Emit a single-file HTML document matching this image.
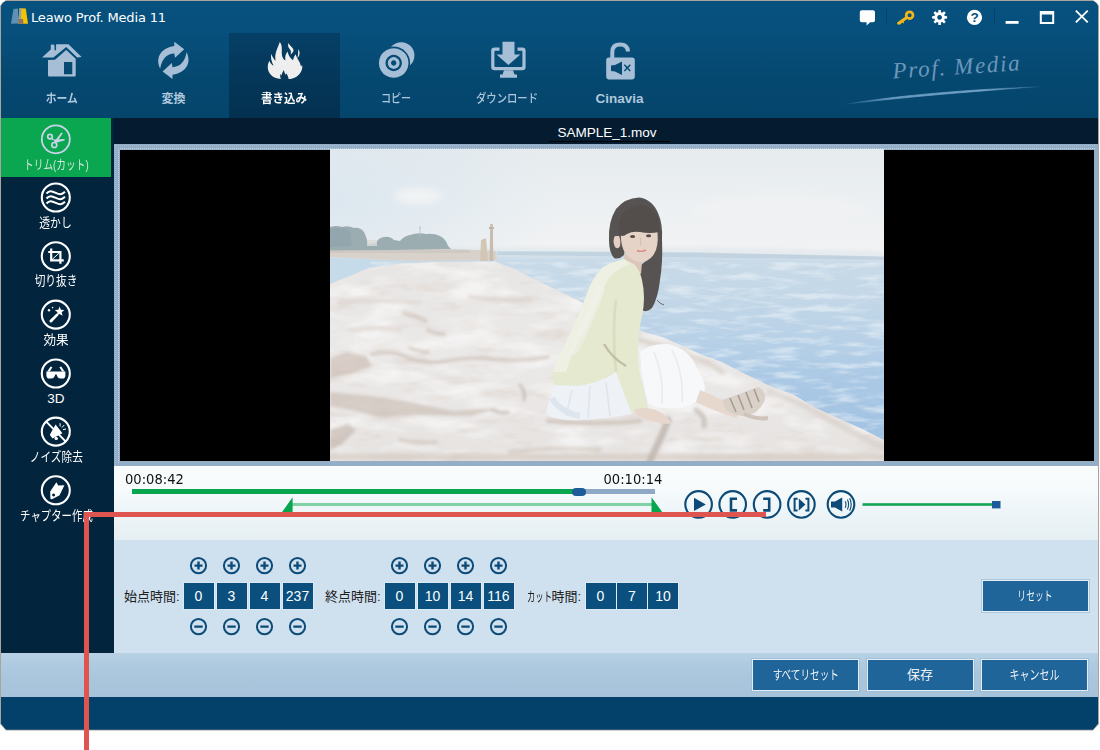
<!DOCTYPE html>
<html lang="ja">
<head>
<meta charset="utf-8">
<title>Leawo Prof. Media 11</title>
<style>
*{box-sizing:border-box;margin:0;padding:0}
html,body{width:1100px;height:750px;overflow:hidden;background:#fff}
body{position:relative;font-family:"Liberation Sans","Noto Sans CJK JP",sans-serif;font-size:13px;color:#fff}
.abs{position:absolute}
#win{position:absolute;left:0;top:0;width:1100px;height:731px;background:#a9a49c;
 clip-path:polygon(0 6px,2px 3px,6px 0,1093px 0,1097px 3px,1099px 6px,1099px 724px,1093px 730.5px,6px 730.5px,0 724px)}
#inner{position:absolute;left:0;top:0;width:1100px;height:731px;overflow:hidden;background:#07507d;
 clip-path:polygon(1px 6px,3px 3px,6px 1px,1093px 1px,1096px 3px,1098px 6px,1098px 723.5px,1093px 729.5px,6px 729.5px,1px 723.5px)}
/* top bar */
#top{position:absolute;left:0;top:0;width:1100px;height:118px;background:linear-gradient(#07517e 0,#07507d 30px,#05486f 80px,#04456c 118px)}
#title{position:absolute;left:31px;top:10px;font-family:"DejaVu Sans","Liberation Sans",sans-serif;font-size:13px;color:#fff;white-space:nowrap;letter-spacing:-.15px}
.tab{position:absolute;top:33px;width:111px;height:85px}
.tab.on{background:linear-gradient(#063f66,#03304f)}
.tab svg{position:absolute;left:50%;top:0;transform:translateX(-50%)}
.tab .lb{position:absolute;left:-20px;right:-20px;top:58px;text-align:center;font-size:12px;font-weight:700;color:#b0c8dd;white-space:nowrap;line-height:16px}
.tab.on .lb{color:#fff}
/* sidebar */
#side{position:absolute;left:0;top:118px;width:114px;height:535px;background:#03243d}
.si{position:absolute;left:0;width:111px;height:58.5px}
.si.on{background:#0aa650}
.si svg{position:absolute;left:40px;top:6px}
.si .lb{position:absolute;left:-10px;right:-10px;top:38px;text-align:center;font-size:13px;color:#fff;white-space:nowrap;line-height:16px}
.si.on .lb{color:#d6ebdf}
/* main */
#fname{position:absolute;left:114px;top:118px;width:986px;height:26px;background:#041b30;text-align:center;font-size:13.55px;line-height:29px;color:#fff;letter-spacing:-.05px}
#frame{position:absolute;left:114px;top:144px;width:984px;height:322px;background:#94aec8}
#black{position:absolute;left:120px;top:150px;width:974px;height:310.5px;background:#000}
#photo{position:absolute;left:330px;top:149px;width:554px;height:312px}
#ctl{position:absolute;left:114px;top:466px;width:986px;height:74px;background:linear-gradient(#f8fcfd 0,#f7fbfc 20px,#eef5f8 45px,#e6eff3 74px)}
#trim{position:absolute;left:114px;top:540px;width:986px;height:113px;background:#cfe0ee}
#foot{position:absolute;left:0;top:653px;width:1100px;height:44px;background:linear-gradient(#b7d0e4 0,#aac7de 20px,#a6c3db 44px)}
#bot{position:absolute;left:0;top:697px;width:1100px;height:34px;background:#04416a}
.time{transform:scaleY(1.1);transform-origin:0 80%;position:absolute;font-family:"DejaVu Sans","Liberation Sans",sans-serif;font-size:13.1px;color:#111;white-space:nowrap;line-height:14px}
.box{position:absolute;top:583px;width:30px;height:26px;background:#0a4f7d;color:#fff;font-size:14px;line-height:27.5px;text-align:center;outline:1px solid rgba(230,240,248,.55)}
.tl{position:absolute;top:589px;font-size:13px;line-height:16px;color:#1c1c1c;white-space:nowrap}
.btn{font-weight:350;position:absolute;width:107px;height:32px;background:#20659a;border:1px solid #e3eef6;box-shadow:0 0 0 1px rgba(150,185,212,.6);color:#fff;font-size:13px;line-height:30.5px;text-align:center;white-space:nowrap}
.pm{position:absolute}
.k{display:inline-block;transform-origin:50% 50%}
#red1{position:absolute;left:84px;top:512px;width:682px;height:5px;background:#de554f}
#red2{position:absolute;left:84px;top:512px;width:5px;height:238px;background:#de554f}
</style>
</head>
<body>
<div id="win"><div id="inner">
<div id="top">
 <svg class="abs" style="left:10px;top:8px" width="20" height="18" viewBox="10 8 20 18">
  <path d="M13.5,9 L18,8.5 L18.5,23.5 L11,23.8Z" fill="#6f9cc0" opacity=".85"/>
  <path d="M19.5,8.3 L25.8,8.5 L28,23.8 L18.2,23.8Z" fill="#f5c400"/>
  <path d="M19.5,8.3 L21.5,8.4 L21.2,19 L18.2,23.8Z" fill="#9aa0a8"/>
  <path d="M18.3,19 L23,19 L23.5,23.8 L18.2,23.8Z" fill="#8a7466"/>
 </svg>
 <div id="title">Leawo Prof. Media 11</div>

 <div class="tab" style="left:6px"><div class="lb"><span class="k" style="transform:scaleX(.9)">ホーム</span></div></div>
 <div class="tab" style="left:118px"><div class="lb">変換</div></div>
 <div class="tab on" style="left:229px"><div class="lb"><span class="k" style="transform:scaleX(.96)">書き込み</span></div></div>
 <div class="tab" style="left:341px"><div class="lb" style="font-weight:500"><span class="k" style="transform:scaleX(.84)">コピー</span></div></div>
 <div class="tab" style="left:452px"><div class="lb" style="font-weight:500"><span class="k" style="transform:scaleX(.86)">ダウンロード</span></div></div>
 <div class="tab" style="left:564px"><div class="lb" style="font-size:13.5px;top:58px">Cinavia</div></div>
 <svg class="abs" style="left:0;top:33px" width="700" height="60" viewBox="0 33 700 60">
  <g fill="#a6bfd6">
   <!-- home -->
   <path d="M42,57.6 L56.5,44.3 L68.5,44.3 L81.6,57 L77.2,57.6 L66.2,47 L53.4,57.6Z"/>
   <rect x="50.8" y="44.6" width="3.6" height="7"/>
   <path d="M55.3,43.5 V50.2" stroke="#07507d" stroke-width="1.5"/>
   <path fill-rule="evenodd" d="M48,60 L55,59.8 L66.2,50 L75.7,58.8 L75.7,75.5 Q75.7,76.6 74.6,76.6 L49.1,76.6 Q48,76.6 48,75.5Z M64,62 H72.3 V74.3 H64Z"/>
   <!-- convert -->
   <path id="cv" d="M160.2,68.5 C155.6,59 159,48.6 174.3,46 L174.3,41.7 L184.2,49.3 L175,57.8 L174.3,53.6 C167,54 162,58.5 160.2,68.5Z"/>
   <use href="#cv" transform="rotate(180 173.4 60.4)"/>
   <!-- copy -->
   <mask id="mk" maskUnits="userSpaceOnUse" x="370" y="35" width="60" height="50"><rect x="370" y="35" width="60" height="50" fill="#fff"/><circle cx="393.7" cy="63" r="16.4" fill="#000"/></mask><circle cx="401.2" cy="55.4" r="13.2" mask="url(#mk)"/>
   <path fill-rule="evenodd" d="M393.7,48.2 a14.8 14.8 0 1 0 .01,0Z M393.7,54.8 a8.2 8.2 0 1 1 -.01,0Z M393.7,57.1 a5.9 5.9 0 1 0 .01,0Z M393.7,60.3 a2.7 2.7 0 1 1 -.01,0Z"/>
   <!-- download -->
   <path d="M502.5,41.8 H514.5 V54.6 H520.3 L508.4,65 L496.5,54.6 H502.5Z"/>
   <path d="M499.5,47.5 H494.5 Q491.2,47.5 491.2,50.8 V67 Q491.2,70.3 494.5,70.3 H522.3 Q525.6,70.3 525.6,67 V50.8 Q525.6,47.5 522.3,47.5 H517.5 V50.7 H521.3 Q522.4,50.7 522.4,51.8 V66 Q522.4,67.1 521.3,67.1 H495.5 Q494.4,67.1 494.4,66 V51.8 Q494.4,50.7 495.5,50.7 H499.5Z"/>
   <path d="M504,70.3 H513 L514.5,74.6 H517 V77.8 H500 V74.6 H502.5Z"/>
   <!-- lock -->
   <path d="M610.3,58 V52 Q610.3,42.6 620.2,42.6 Q629.5,42.6 630,51.6 L626,51.6 Q625.6,46.4 620.2,46.4 Q614.3,46.4 614.3,52 V58Z"/>
   <path fill-rule="evenodd" d="M609,57.4 H632 Q634.8,57.4 634.8,60.2 V76.6 Q634.8,79.4 632,79.4 H609 Q606.2,79.4 606.2,76.6 V60.2 Q606.2,57.4 609,57.4Z M611,65.5 L615,65 L622,61.5 V75 L615,71.5 L611,71Z M623.8,65.2 L624.8,64.2 L627.3,66.8 L629.8,64.2 L630.8,65.2 L628.3,67.9 L630.8,70.6 L629.8,71.6 L627.3,69 L624.8,71.6 L623.8,70.6 L626.3,67.9Z"/>
  </g>
  <!-- flame -->
  <g fill="#eeeeee">
   <path d="M281,79 C272,78.5 267.2,72.5 267.8,66 C268,63.8 268.7,62.3 269.4,60.8 C270.3,63.3 271.8,64.8 273.6,65.8 C271.6,61.5 270.3,58 271.3,53.8 C272.3,57 273.8,59.2 275.6,60.8 C274.2,54 277.2,49 279.8,42 C283.6,46.5 280.4,53 282.8,57.8 C283.5,59.2 284.5,60 285.4,60.4 C284.8,57 285.6,54 287.5,51.5 C288.2,54.5 289.6,57.5 293,60.3 C293.6,58 294.2,56 295.6,54.2 C296.8,58.5 300.2,61.5 301,66.5 C301.5,66 301.9,65.4 302.1,64.7 C303,69 300.8,73.8 296.5,76.7 C293.8,78.4 291,79 288.6,79 C288.4,76.5 287.2,74.5 286,73.2 L285.2,75.2 C284.8,73 284.3,71.2 283.6,70 C283,72 281.6,73.8 281.6,75.5 L280.4,74 C280,76 280.3,77.8 281,79Z"/>
   <path d="M288.6,43 C290.4,47 294.4,48.2 293.4,51.3 C292.8,53 291.3,53.6 290.6,54.8 C291.2,52.2 291.2,50.6 289.6,49 C288,47.2 287.6,45 288.6,43Z"/>
   <path d="M298.4,49 C300.2,52 300.2,55.2 297.4,58.2 C298.4,55 298,52 298.4,49Z"/>
  </g>
 </svg>


 <svg class="abs" style="left:850px;top:0" width="250" height="34" viewBox="850 0 250 34">
  <g fill="#fff">
   <path d="M861.8,10.3 H873 Q875,10.3 875,12.3 V20.2 Q875,22.2 873,22.2 H870.2 L866.6,25.4 L866.6,22.2 H861.8 Q859.8,22.2 859.8,20.2 V12.3 Q859.8,10.3 861.8,10.3Z"/>
   <path fill-rule="evenodd" d="M938.29,12.26 L938.39,9.90 L940.81,9.90 L940.91,12.26 L942.30,12.84 L944.05,11.24 L945.76,12.95 L944.16,14.70 L944.74,16.09 L947.10,16.19 L947.10,18.61 L944.74,18.71 L944.16,20.10 L945.76,21.85 L944.05,23.56 L942.30,21.96 L940.91,22.54 L940.81,24.90 L938.39,24.90 L938.29,22.54 L936.90,21.96 L935.15,23.56 L933.44,21.85 L935.04,20.10 L934.46,18.71 L932.10,18.61 L932.10,16.19 L934.46,16.09 L935.04,14.70 L933.44,12.95 L935.15,11.24 L936.90,12.84Z M939.60,15.00 a2.4 2.4 0 1 0 .01,0Z"/>
   <circle cx="974.5" cy="17.4" r="7.6"/>
   <rect x="1005.6" y="21" width="13" height="2.8"/>
   <path fill-rule="evenodd" d="M1039.8,11 H1054.2 V24 H1039.8Z M1041.8,14.4 H1052.2 V22 H1041.8Z"/>
   <path d="M1075.2,11.2 L1076.5,9.9 L1081.8,15.2 L1087.1,9.9 L1088.4,11.2 L1083.1,16.5 L1088.4,21.8 L1087.1,23.1 L1081.8,17.8 L1076.5,23.1 L1075.2,21.8 L1080.5,16.5Z"/>
  </g>
  <text x="974.5" y="22.3" text-anchor="middle" font-family="Liberation Sans,sans-serif" font-weight="700" font-size="13.5" fill="#07507d">?</text>
  <g fill="none" stroke="#f2b61c">
   <circle cx="909.6" cy="15.2" r="3.4" stroke-width="2.7"/>
   <path d="M906.8,17.6 L898.6,23.2" stroke-width="3" stroke-linecap="round"/>
   <path d="M902.2,21.2 L903.6,23 M899.8,22.8 L900.8,24.2" stroke-width="1.4"/>
  </g>
  <path d="M886.5,9.5 V24.5 M994.5,9.5 V24.5" stroke="#053a5d" stroke-width="1" stroke-dasharray="2 1"/>
 </svg>
 <svg class="abs" style="left:830px;top:40px" width="240" height="76" viewBox="830 40 240 76">
  <defs><linearGradient id="sw" x1="0" x2="1"><stop offset="0" stop-color="#5f93bd" stop-opacity="0"/><stop offset=".25" stop-color="#6fa0c8" stop-opacity=".9"/><stop offset=".7" stop-color="#7aa9cf" stop-opacity=".9"/><stop offset="1" stop-color="#6fa0c8" stop-opacity="0"/></linearGradient></defs>
  <text transform="translate(893 78.5) rotate(-3.7)" font-family="Liberation Serif,serif" font-style="italic" font-size="23" letter-spacing="1.7" fill="#6d97bb">Prof. Media</text>
  <path d="M843,104.5 C900,95 970,89.5 1042,86.6 C975,91 905,97 843,104.5Z" fill="url(#sw)" stroke="url(#sw)" stroke-width=".8"/>
 </svg>


</div>
<div id="side">
 <div class="si on" style="top:0;height:59px"></div>
 <div class="abs" style="left:-20px;width:152px;top:38.5px;text-align:center;font-size:13px;line-height:16px;color:#d3e6dc;white-space:nowrap"><span class="k" style="transform:scaleX(0.745)">トリム(カット)</span></div>
 <div class="abs" style="left:-20px;width:152px;top:96.7px;text-align:center;font-size:13px;line-height:16px;color:#fff;white-space:nowrap"><span class="k" style="transform:scaleX(0.83)">透かし</span></div>
 <div class="abs" style="left:-20px;width:152px;top:155.4px;text-align:center;font-size:13px;line-height:16px;color:#fff;white-space:nowrap"><span class="k" style="transform:scaleX(0.82)">切り抜き</span></div>
 <div class="abs" style="left:-20px;width:152px;top:213.8px;text-align:center;font-size:13px;line-height:16px;color:#fff;white-space:nowrap"><span class="k" style="transform:scaleX(0.97)">効果</span></div>
 <div class="abs" style="left:-20px;width:152px;top:272.7px;text-align:center;font-size:13.5px;line-height:16px;color:#fff;white-space:nowrap"><span class="k" style="transform:scaleX(1)">3D</span></div>
 <div class="abs" style="left:-20px;width:152px;top:330.8px;text-align:center;font-size:13px;line-height:16px;color:#fff;white-space:nowrap"><span class="k" style="transform:scaleX(0.82)">ノイズ除去</span></div>
 <div class="abs" style="left:-20px;width:152px;top:389.5px;text-align:center;font-size:13px;line-height:16px;color:#fff;white-space:nowrap"><span class="k" style="transform:scaleX(0.8)">チャプター作成</span></div>
 <svg class="abs" style="left:0;top:0" width="114" height="420" viewBox="0 118 114 420">
  <circle cx="55.8" cy="139.3" r="14" fill="none" stroke="#c9d3ea" stroke-width="1.8"/>
  <circle cx="55.8" cy="197.5" r="14" fill="none" stroke="#fff" stroke-width="2.1"/>
  <circle cx="55.8" cy="256.2" r="14" fill="none" stroke="#fff" stroke-width="2.1"/>
  <circle cx="55.8" cy="314.6" r="14" fill="none" stroke="#fff" stroke-width="2.1"/>
  <circle cx="55.8" cy="373.5" r="14" fill="none" stroke="#fff" stroke-width="2.1"/>
  <circle cx="55.8" cy="431.6" r="14" fill="none" stroke="#fff" stroke-width="2.1"/>
  <circle cx="55.8" cy="490.3" r="14" fill="none" stroke="#fff" stroke-width="2.1"/>
  <g fill="none" stroke="#c9d3ea" stroke-width="1.7">
   <circle cx="50" cy="136.6" r="2.3"/><circle cx="54.3" cy="145" r="2.5"/>
  </g>
  <g fill="#c9d3ea">
   <path d="M51.8,138 L55.4,140.2 L61.3,132.6 L62.8,133.3 L56.6,142.2 L55.6,143.2 L54.2,142.4 L54.6,140.8 L51,139.2Z"/>
   <path d="M54.6,139.6 L64.8,139 L64.4,140.6 L57,142.6 L54.6,141.2Z"/>
  </g>
  <path d="M46.5,193.5 C49.5,189.9 52,191.1 55.8,192.9 S61.5,194.9 65,191.7" fill="none" stroke="#fff" stroke-width="2"/>
  <path d="M46.5,198.5 C49.5,194.9 52,196.1 55.8,197.9 S61.5,199.9 65,196.7" fill="none" stroke="#fff" stroke-width="2"/>
  <path d="M46.5,203.5 C49.5,199.9 52,201.1 55.8,202.9 S61.5,204.9 65,201.7" fill="none" stroke="#fff" stroke-width="2"/>
  <g fill="none" stroke="#fff">
   <path d="M51.2,248.4 V260.4 H63.8 M48.2,252 H60.4 V263.8" stroke-width="2.2"/>
   <path d="M52.2,259.4 L59.6,252.6" stroke-width="1"/>
  </g>
  <g fill="#fff">
   <path d="M59.6,306.6 L60.9,309.8 L64.4,310 L61.7,312.3 L62.6,315.8 L59.6,313.9 L56.6,315.8 L57.5,312.3 L54.8,310 L58.3,309.8Z"/>
   <path d="M56.6,313.4 L58.4,315.2 L52,322 Q50.8,323 49.8,322 Q48.9,321 49.9,319.9Z"/>
   <circle cx="49" cy="310.3" r="1.2"/><circle cx="52.6" cy="307.6" r=".8"/>
  </g>
  <g fill="#fff">
   <path d="M46.4,371.6 H65.4 V375.5 Q65.4,378.6 62.4,378.6 H60.4 Q58,378.6 57.2,376.2 L56.6,374.6 H55.2 L54.6,376.2 Q53.8,378.6 51.4,378.6 H49.4 Q46.4,378.6 46.4,375.5Z"/>
   <path d="M47.2,371.6 L50.6,366.4 L52.4,367.2 L49.8,371.6Z M64.6,371.6 L61.2,366.4 L59.4,367.2 L62,371.6Z"/>
  </g>
  <g fill="#fff">
   <path d="M55.6,424.6 L62.4,433.2 L52.6,438.6 L50.2,435.6 Q49.6,434.6 50.4,433.8Z"/>
   <circle cx="56.2" cy="438.4" r="1.7"/>
  </g>
  <g stroke="#fff" fill="none">
   <path d="M46,421.4 L65.8,441.6" stroke-width="2"/>
   <path d="M60.2,426.4 L60,423.2 M62,427.6 L64.2,425 M63,429.6 L66,429" stroke-width="1"/>
  </g>
  <path d="M47.4,422.8 L64.4,440.2" stroke="#03243d" stroke-width=".0"/>
  <path fill="#fff" fill-rule="evenodd" d="M56.4,482.2 L58.2,485.6 L64.4,485.2 L59.6,495.2 L52,499.2 Q50.6,499.6 50.4,498.2 L50.2,491.4Z M53.6,493.6 a1.5 1.5 0 1 0 .01,0Z"/>
 </svg>

</div>
<div id="fname">SAMPLE_1.mov</div>
<div class="abs" style="left:549px;top:141px;width:121px;height:1.2px;background:#000"></div>
<div id="frame"><div class="abs" style="left:1px;top:1px;right:1px;bottom:1px;border:1px dotted #a3bbd3;border-right:0;border-bottom:0"></div><div class="abs" style="left:4px;top:4px;right:3px;bottom:3px;border:1px dotted #c0d3e4;border-right:0;border-bottom:0"></div></div>
<div id="black"></div>
<!--PHOTO_START-->
<svg id="photo" viewBox="330 149 554 312" width="554" height="312" preserveAspectRatio="none">
 <defs>
  <linearGradient id="sky" x1="0" y1="149" x2="0" y2="252" gradientUnits="userSpaceOnUse">
   <stop offset="0" stop-color="#e6ebee"/><stop offset=".55" stop-color="#ecf0f2"/><stop offset="1" stop-color="#f2f2f3"/>
  </linearGradient>
  <linearGradient id="sea" x1="0" y1="250" x2="0" y2="461" gradientUnits="userSpaceOnUse">
   <stop offset="0" stop-color="#cadbe8"/><stop offset=".22" stop-color="#c3d7e7"/><stop offset=".42" stop-color="#b8d1e7"/><stop offset=".6" stop-color="#abc9e5"/><stop offset=".8" stop-color="#a4c4e3"/><stop offset="1" stop-color="#a1c1e1"/>
  </linearGradient>
  <linearGradient id="rock" x1="0" y1="261" x2="0" y2="461" gradientUnits="userSpaceOnUse">
   <stop offset="0" stop-color="#e8e6e5"/><stop offset=".5" stop-color="#ebe9e8"/><stop offset="1" stop-color="#e6e3e1"/>
  </linearGradient>
  <radialGradient id="skyl" cx="330" cy="205" r="230" gradientUnits="userSpaceOnUse" gradientTransform="translate(0 102) scale(1 .5)"><stop offset="0" stop-color="#d6e4ee" stop-opacity=".75"/><stop offset="1" stop-color="#d6e4ee" stop-opacity="0"/></radialGradient>
  <filter id="b1" x="-10%" y="-10%" width="120%" height="120%"><feGaussianBlur stdDeviation=".7"/></filter>
  <filter id="b2" x="-20%" y="-20%" width="140%" height="140%"><feGaussianBlur stdDeviation="1.6"/></filter>
  <filter id="b4" x="-30%" y="-30%" width="160%" height="160%"><feGaussianBlur stdDeviation="4"/></filter>
  <filter id="tex" x="0" y="0" width="100%" height="100%">
   <feTurbulence type="fractalNoise" baseFrequency=".028 .085" numOctaves="4" seed="11" result="n"/>
   <feColorMatrix in="n" type="matrix" values="0 0 0 0 .75  0 0 0 0 .69  0 0 0 0 .65  0 0 0 3.4 -1.75"/>
   <feComposite in2="SourceGraphic" operator="in"/>
  </filter>
  <filter id="tex2" x="0" y="0" width="100%" height="100%">
   <feTurbulence type="fractalNoise" baseFrequency=".02 .06" numOctaves="3" seed="3" result="n"/>
   <feColorMatrix in="n" type="matrix" values="0 0 0 0 .97  0 0 0 0 .97  0 0 0 0 .97  0 0 0 3 -1.35"/>
   <feComposite in2="SourceGraphic" operator="in"/>
  </filter>
  <filter id="rip" x="0" y="0" width="100%" height="100%">
   <feTurbulence type="fractalNoise" baseFrequency=".03 .16" numOctaves="3" seed="5" result="n"/>
   <feColorMatrix in="n" type="matrix" values="0 0 0 0 .86  0 0 0 0 .91  0 0 0 0 .95  0 0 0 3.2 -1.5"/>
   <feComposite in2="SourceGraphic" operator="in"/>
  </filter>
  <clipPath id="pc"><rect x="330" y="149" width="554" height="312"/></clipPath>
  <path id="pier" d="M330,284 L350,276 L368,268.5 L400,263.5 L440,262 L495,261.5 L512,268 L540,282 L579,301 L600,312 L638,330 L665,338 L700,354 L722,362 L745,374 L770,386 L794,395 L816,408 L840,419 L862,429 L884,440 V461 H330Z"/>
 </defs>
 <g clip-path="url(#pc)">
  <rect x="330" y="149" width="554" height="114" fill="url(#sky)"/>
  <path d="M330,252 L560,251 L700,253 L884,257 V461 H330Z" fill="url(#sea)"/>
  <path d="M330,262 H884 V461 H330Z" fill="#fff" filter="url(#rip)" opacity=".55"/>
  <!-- haze on horizon -->
  <path d="M330,247 L700,247 L884,251 V261 L700,258 H330Z" fill="#dde6ec" opacity=".6" filter="url(#b2)"/>
  <rect x="330" y="149" width="260" height="103" fill="url(#skyl)"/>
  <path d="M497,251.5 L700,252.5 L884,256.5 V260 L700,257.5 L497,255Z" fill="#bccedd" opacity=".75" filter="url(#b1)"/>
  <!-- clouds -->
  <ellipse cx="418" cy="196" rx="24" ry="7" fill="#f3f4f5" filter="url(#b4)"/>
  <ellipse cx="780" cy="210" rx="90" ry="16" fill="#eff1f2" filter="url(#b4)"/>
  <!-- distant land -->
  <g filter="url(#b1)">
   <path d="M330,227 Q336,225 342,227 Q348,225 354,228 Q360,227 364,232 Q367,238 368,244 L376,243 Q378,238 384,237 Q390,236 394,240 L400,241 Q404,236 410,235 Q418,232 426,234 Q434,233 440,236 Q446,239 448,246 L452,250 L330,252Z" fill="#9cadb1"/>
   <rect x="367" y="240" width="10" height="6" fill="#dcdcd8" opacity=".8"/>
   <path d="M330,229 Q340,226 350,231 L352,246 L330,247Z" fill="#93a6ad"/>
   <path d="M330,251 L452,249 L480,250 L496,251 L497,260 L420,261 L368,259 L330,257Z" fill="#d9d2cb"/>
   <path d="M330,250 H470 V253 H330Z" fill="#c9c4bd" opacity=".7"/>
   <path d="M490.2,224 H492.8 L493.4,261 H489.6Z" fill="#c8bcae"/>
   <rect x="489" y="227" width="5" height="2" fill="#c2b5a8"/>
   <path d="M481,240 L486,238 L488,261 H480Z" fill="#d2c7b6"/>
   <path d="M420,226 V236 M419,228 H421" stroke="#b9c0c4" stroke-width=".8"/>
  </g>
  <path d="M330,258 L372,260 L368,268 L330,284Z" fill="#c6dbea"/>
  <!-- pier -->
  <use href="#pier" fill="url(#rock)"/>
  <use href="#pier" fill="#fff" filter="url(#tex)" opacity=".66"/>
  <use href="#pier" fill="#fff" filter="url(#tex2)" opacity=".6"/>
  <!-- rock cracks / shadows -->
  <g filter="url(#b2)" stroke-linecap="round" stroke-linejoin="round" opacity=".72">
   <path d="M330,392 L372,396 L410,402 L452,411 L500,408 L470,416 L420,415 L380,417 L352,410 L330,406Z" fill="#c9bcb3" opacity=".9"/>
   <path d="M330,358 L346,352 L366,356 L372,366 L350,374 L330,378Z" fill="#c9b9ae" opacity=".85"/>
   <path d="M330,430 L348,424 L356,430 L342,444 L330,450Z" fill="#bfb1a8" opacity=".85"/>
   <g fill="none">
    <path d="M372,354 Q392,350 404,356 Q418,364 440,362 Q470,356 492,359 Q520,362 548,357" stroke="#c9bbb1" stroke-width="3.5" opacity=".85"/>
    <path d="M404,313 Q416,316 426,321 M428,330 Q436,334 444,334 M410,348 Q420,352 428,352" stroke="#c9bbb1" stroke-width="4" opacity=".8"/>
    <path d="M340,303 Q380,299 420,303 M470,297 Q500,301 530,299 M350,330 Q380,326 400,330" stroke="#d8cec7" stroke-width="4" opacity=".7"/>
    <path d="M492,410 Q500,414 508,412 M520,385 Q526,392 524,400" stroke="#b5a79e" stroke-width="3" opacity=".8"/>
    <path d="M330,457 H884" stroke="#d3c8be" stroke-width="7" opacity=".85"/>
    <path d="M668,420 Q662,436 656,448 Q652,456 650,461" stroke="#b3a69e" stroke-width="7" opacity=".85"/>
    <path d="M696,410 Q706,416 704,426" stroke="#b9aca3" stroke-width="5" opacity=".75"/>
    <path d="M640,340 Q670,348 700,360 Q716,366 722,372" stroke="#d4c8bf" stroke-width="5" opacity=".75"/>
    <path d="M770,392 Q800,402 830,420 Q860,436 884,448" stroke="#d3c8c0" stroke-width="6" opacity=".65"/>
    <path d="M548,421 Q600,425 640,421" stroke="#c6b8ae" stroke-width="4.5" opacity=".85"/>
    <path d="M510,452 Q560,446 600,450 M400,440 Q420,444 436,442" stroke="#cdc0b7" stroke-width="4" opacity=".7"/>
   </g>
  </g>
  <g filter="url(#b1)">
   <!-- hair back -->
   <path d="M639,197.5 Q625,198 616,209 Q608,222 609,240 Q609,252 614,258 Q619,260 624,255 L626,240 L650,236 L656,232 Q657,246 650,256 Q644,264 636,268 Q640,278 641,290 Q640,300 641,309 Q646,314 652,308 Q658,298 660,280 Q663,262 662,240 Q663,224 658,213 Q652,199 639,197.5Z" fill="#585352"/>
   <path d="M657,300 Q660,304 664,305" stroke="#6a6463" stroke-width="1" fill="none"/>
   <!-- neck -->
   <path d="M624,254 L642,262 L641,274 L625,268Z" fill="#dcc6ba"/>
   <!-- face -->
   <path d="M621,232 Q620,246 626,254 Q634,263 643,262 Q652,260 656,250 Q659,240 657,229 L640,226Z" fill="#e6d3c8"/>
   <path d="M615,236 Q612,240 615,247 Q618,250 620,246 Q621,240 619,236Z" fill="#e3cfc3"/>
   <!-- bangs -->
   <path d="M622,214 Q630,205 642,205 Q656,207 659,222 L659,232 Q650,234 640,232 Q632,231 627,234 Q622,238 619,234 Q618,222 622,214Z" fill="#524d4c"/>
   <ellipse cx="632.6" cy="236.4" rx="2.6" ry="1.5" fill="#5a4c48"/><ellipse cx="648.6" cy="235.8" rx="2.6" ry="1.5" fill="#5a4c48"/>
   <path d="M640.5,238 Q641.5,243 640,246" stroke="#d6bdb0" stroke-width="1" fill="none"/>
   <path d="M637,250.5 Q641,252.5 646,250" stroke="#d98a86" stroke-width="1.4" fill="none"/>
   <!-- cardigan -->
   <path d="M624,259 Q612,262 602,268 Q592,278 586,296 Q578,318 568,338 Q558,358 553,372 Q551,382 556,386 Q580,388 604,380 Q612,376 616,372 Q622,392 630,410 Q636,416 646,414 Q650,410 646,400 Q640,380 638,358 Q637,336 642,316 Q646,298 642,280 Q640,270 634,264Z" fill="#e4e9d0"/>
   <path d="M624,259 Q612,262 602,268 Q592,278 586,296 Q578,318 568,338 Q558,358 553,372 L566,372 Q572,352 584,332 Q596,310 602,292 Q608,276 618,270 Q624,266 630,264Z" fill="#edf0e2"/>
   <path d="M616,300 Q612,330 616,372" stroke="#d3dab8" stroke-width="2.5" fill="none" opacity=".8"/>
   <path d="M600,290 Q590,320 574,350" stroke="#f0f1ea" stroke-width="9" fill="none" opacity=".6" stroke-linecap="round"/>
   <path d="M604,344 Q612,358 626,366" stroke="#b9b49a" stroke-width="2.5" fill="none" opacity=".8"/>
   <!-- skirt -->
   <path d="M555,385 Q548,402 546,414 Q556,421 580,420 Q606,419 632,414 Q624,394 616,372 Q606,380 580,386Z" fill="#eef1f5"/>
   <path d="M640,352 Q650,343 668,344 Q688,348 696,366 Q704,380 705,388 Q704,398 696,402 Q684,410 666,408 Q656,408 648,404 Q642,384 640,352Z" fill="#f6f8f9"/>
   <path d="M552,398 Q560,412 580,416" stroke="#d8e2ec" stroke-width="6" fill="none" opacity=".8"/>
   <path d="M572,390 L566,416 M590,386 L588,418 M606,382 L610,416" stroke="#dde4ec" stroke-width="1.6" fill="none" opacity=".9"/>
   <path d="M654,352 Q664,376 662,404 M672,350 Q684,374 682,402" stroke="#e8ecf0" stroke-width="1.6" fill="none"/>
   <!-- hand -->
   <path d="M634,410 Q644,406 656,410 Q668,416 672,424 Q660,424 648,420 Q638,418 634,410Z" fill="#e6d6cc"/>
   <!-- leg -->
   <path d="M700,390 Q720,398 742,410 L736,418 Q716,412 696,402Z" fill="#e7d8ce"/>
   <!-- sandal -->
   <path d="M722,400 Q740,394 758,387 Q768,392 764,402 Q758,414 746,416 Q734,416 726,410Z" fill="#d9d0c8"/>
   <path d="M730,398 L736,412 M738,395 L744,410 M746,392 L752,408 M754,389 L759,402" stroke="#a89c93" stroke-width="1.6"/>
   <path d="M744,414 Q758,420 768,418" stroke="#cfc4bb" stroke-width="4" fill="none"/>
  </g>

 </g>
</svg>
<!--PHOTO_END-->
<div id="ctl"></div>

<div class="time" style="left:125px;top:473px">00:08:42</div>
<div class="time" style="left:603.5px;top:473px">00:10:14</div>
<div class="abs" style="left:132px;top:489px;width:523px;height:4.5px;background:#8ea9c6"></div>
<div class="abs" style="left:132px;top:489px;width:446px;height:4.5px;background:#08a54f"></div>
<div class="abs" style="left:572px;top:487.5px;width:14px;height:8px;border-radius:4px;background:#1d5c98"></div>
<div class="abs" style="left:292px;top:503px;width:360px;height:3px;background:#7fd0a5"></div>
<svg class="abs" style="left:270px;top:490px" width="800" height="34" viewBox="270 490 800 34">
 <path d="M281.7,512.5 L292.6,497.3 V512.5Z M651.5,497.3 L662.6,512.5 H651.5Z" fill="#08a54f"/>
 <g fill="none" stroke="#0c4a78" stroke-width="2.1">
  <circle cx="698.6" cy="504.4" r="13.3"/><circle cx="732.7" cy="504.4" r="13.3"/><circle cx="767.1" cy="504.4" r="13.3"/><circle cx="801.4" cy="504.4" r="13.3"/><circle cx="841" cy="504.4" r="13.3"/>
  <path d="M737,498.8 H731 V510.4 H737 M763.2,498.8 H769.2 V510.4 H763.2" stroke-width="2.6"/>
  <path d="M797.6,498.8 H794.6 V510.4 H797.6 M805.4,498.8 H808.4 V510.4 H805.4" stroke-width="2"/>
  <path d="M845.2,501.2 Q846.8,504.4 845.2,507.8 M847.4,499.6 Q849.8,504.4 847.4,509.4 M849.6,498.2 Q852.8,504.4 849.6,510.8" stroke-width="1.1"/>
 </g>
 <g fill="#0c4a78">
  <path d="M694,497.8 L705.8,504.4 L694,511Z"/>
  <path d="M798.8,498.4 L805.4,504.5 L798.8,510.6Z"/>
  <path d="M831,501.4 H835 L842.2,497.6 V511.4 L835,507.6 H831Z"/>
 </g>
 <rect x="862.5" y="503.2" width="130" height="2.6" fill="#12a556"/>
 <rect x="992" y="501" width="8.5" height="7.4" fill="#1d5c98"/>
</svg>

<div id="trim"></div>
<div class="tl" style="left:124px">始点時間:</div>
<div class="tl" style="left:325px">終点時間:</div>
<div class="tl" style="left:526.5px"><span class="k" style="transform:scaleX(.64);transform-origin:0 50%;margin-right:-14px">カット</span>時間:</div>
<div class="box" style="left:183.5px">0</div>
<div class="box" style="left:216.5px">3</div>
<div class="box" style="left:249.5px">4</div>
<div class="box" style="left:282.5px">237</div>
<div class="box" style="left:384.5px">0</div>
<div class="box" style="left:417.5px">10</div>
<div class="box" style="left:450.5px">14</div>
<div class="box" style="left:483.5px">116</div>
<div class="box" style="left:585.5px">0</div>
<div class="box" style="left:617px">7</div>
<div class="box" style="left:648px">10</div>
<svg class="abs" style="left:180px;top:555px" width="340" height="84" viewBox="180 555 340 84">
 <g fill="none" stroke="#0c4a78" stroke-width="2">
  <circle cx="198.5" cy="565.6" r="7.6"/><circle cx="198.5" cy="626.6" r="7.6"/>
  <path d="M194.5,565.6 H202.5 M198.5,561.6 V569.6 M194.3,626.6 H202.7" stroke-width="2.4"/>
  <circle cx="231.5" cy="565.6" r="7.6"/><circle cx="231.5" cy="626.6" r="7.6"/>
  <path d="M227.5,565.6 H235.5 M231.5,561.6 V569.6 M227.3,626.6 H235.7" stroke-width="2.4"/>
  <circle cx="264.5" cy="565.6" r="7.6"/><circle cx="264.5" cy="626.6" r="7.6"/>
  <path d="M260.5,565.6 H268.5 M264.5,561.6 V569.6 M260.3,626.6 H268.7" stroke-width="2.4"/>
  <circle cx="297.5" cy="565.6" r="7.6"/><circle cx="297.5" cy="626.6" r="7.6"/>
  <path d="M293.5,565.6 H301.5 M297.5,561.6 V569.6 M293.3,626.6 H301.7" stroke-width="2.4"/>
  <circle cx="399.5" cy="565.6" r="7.6"/><circle cx="399.5" cy="626.6" r="7.6"/>
  <path d="M395.5,565.6 H403.5 M399.5,561.6 V569.6 M395.3,626.6 H403.7" stroke-width="2.4"/>
  <circle cx="432.5" cy="565.6" r="7.6"/><circle cx="432.5" cy="626.6" r="7.6"/>
  <path d="M428.5,565.6 H436.5 M432.5,561.6 V569.6 M428.3,626.6 H436.7" stroke-width="2.4"/>
  <circle cx="465.5" cy="565.6" r="7.6"/><circle cx="465.5" cy="626.6" r="7.6"/>
  <path d="M461.5,565.6 H469.5 M465.5,561.6 V569.6 M461.3,626.6 H469.7" stroke-width="2.4"/>
  <circle cx="498.5" cy="565.6" r="7.6"/><circle cx="498.5" cy="626.6" r="7.6"/>
  <path d="M494.5,565.6 H502.5 M498.5,561.6 V569.6 M494.3,626.6 H502.7" stroke-width="2.4"/>
 </g>
</svg>

<div id="foot"></div>
<div id="bot"></div>
<div class="btn" style="left:982px;top:580px"><span class="k" style="transform:scaleX(.68)">リセット</span></div>
<div class="btn" style="left:752px;top:659px"><span class="k" style="transform:scaleX(.74)">すべてリセット</span></div>
<div class="btn" style="left:866.5px;top:659px">保存</div>
<div class="btn" style="left:981px;top:659px"><span class="k" style="transform:scaleX(.77)">キャンセル</span></div>

</div></div>
<div id="red1"></div><div id="red2"></div>
</body>
</html>
